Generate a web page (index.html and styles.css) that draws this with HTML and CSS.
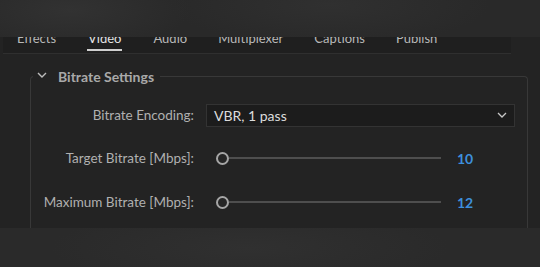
FILE: index.html
```html
<!DOCTYPE html>
<html>
<head>
<meta charset="utf-8">
<link rel="stylesheet" href="styles.css">
</head>
<body>
<div class="top"></div>
<div class="tabs">
  <div class="tab">Effects</div>
  <div class="tab active">Video</div>
  <div class="tab">Audio</div>
  <div class="tab">Multiplexer</div>
  <div class="tab">Captions</div>
  <div class="tab">Publish</div>
</div>
<div class="panel">
  <div class="group">
    <div class="group-head">
      <svg class="chev" width="10" height="6" viewBox="0 0 10 6"><path d="M1 1 L5 5 L9 1" fill="none" stroke="#bdbdbd" stroke-width="1.4"/></svg>
      <span class="group-title">Bitrate Settings</span>
    </div>
    <div class="row row-first">
      <div class="label">Bitrate Encoding:</div>
      <div class="select">
        <span>VBR, 1 pass</span>
        <svg width="10" height="6" viewBox="0 0 10 6"><path d="M1 1 L5 5 L9 1" fill="none" stroke="#c8c8c8" stroke-width="1.3"/></svg>
      </div>
    </div>
    <div class="row">
      <div class="label">Target Bitrate [Mbps]:</div>
      <div class="slider">
        <div class="thumb"></div>
        <div class="track"></div>
        <div class="value">10</div>
      </div>
    </div>
    <div class="row">
      <div class="label">Maximum Bitrate [Mbps]:</div>
      <div class="slider">
        <div class="thumb"></div>
        <div class="track"></div>
        <div class="value">12</div>
      </div>
    </div>
  </div>
</div>
<div class="bottom"></div>
</body>
</html>
```
FILE: styles.css
```css
* { box-sizing: border-box; }
html, body { margin: 0; padding: 0; }
body {
  width: 540px;
  height: 267px;
  overflow: hidden;
  background: #232323;
  font-family: Lato, "Open Sans", sans-serif;
  color: #b4b4b4;
}
.top {
  height: 37px;
  background:
    radial-gradient(ellipse 120px 40px at 70px 10px, #323232, rgba(50,50,50,0)),
    radial-gradient(ellipse 160px 40px at 330px 5px, #303030, rgba(48,48,48,0)),
    #292929;
}
.tabs {
  height: 17px;
  width: 508px;
  margin-left: 3px;
  background: #1f1f1f;
  border-bottom: 1px solid #2f2f2f;
  display: flex;
  gap: 31px;
  overflow: hidden;
  padding-left: 14px;
}
.tab {
  font-size: 13px;
  line-height: 15px;
  margin-top: -6px;
  color: #b8b8b8;
  height: 16px;
}
.tab.active {
  color: #e4e4e4;
  height: 20px;
  border-bottom: 2px solid #cfcfcf;
  padding: 0 1px;
}
.panel {
  height: 174px;
  padding: 22px 12px 0 30px;
  background: #232323;
}
.group {
  border: 1px solid #383838;
  border-bottom: none;
  border-radius: 4px 4px 0 0;
  height: 152px;
}
.group-head {
  display: flex;
  width: fit-content;
  align-items: center;
  margin-top: -10px;
  margin-left: 2px;
  padding: 0 6px 0 4px;
  background: #232323;
  height: 18px;
}
.chev { margin-right: 11px; margin-top: -3px; }
.group-title {
  font-size: 14px;
  font-weight: 700;
  color: #a9a9a9;
}
.row {
  display: flex;
  align-items: center;
  height: 24px;
  margin-top: 19px;
}
.row-first { margin-top: 18px; }
.row:last-child { margin-top: 20px; }
.label {
  width: 163px;
  text-align: right;
  font-size: 13.5px;
  color: #b0b0b0;
  margin-right: 12px;
}
.select {
  width: 309px;
  height: 23px;
  background: #1c1c1c;
  border: 1px solid #333;
  display: flex;
  align-items: center;
  justify-content: space-between;
  padding: 0 7px 0 7px;
  font-size: 14px;
  color: #dcdcdc;
}
.slider {
  display: flex;
  align-items: center;
  padding-left: 10px;
}
.thumb {
  width: 13px;
  height: 13px;
  border: 2px solid #a6a6a6;
  border-radius: 50%;
  background: #262626;
}
.track {
  width: 212px;
  height: 2px;
  background: #4e4e4e;
}
.value {
  margin-left: 16px;
  font-size: 14px;
  font-weight: 700;
  color: #3d8fdc;
}
.bottom {
  height: 39px;
  background:
    radial-gradient(ellipse 200px 40px at 250px 20px, #303030, rgba(48,48,48,0)),
    #2a2a2a;
}
```
